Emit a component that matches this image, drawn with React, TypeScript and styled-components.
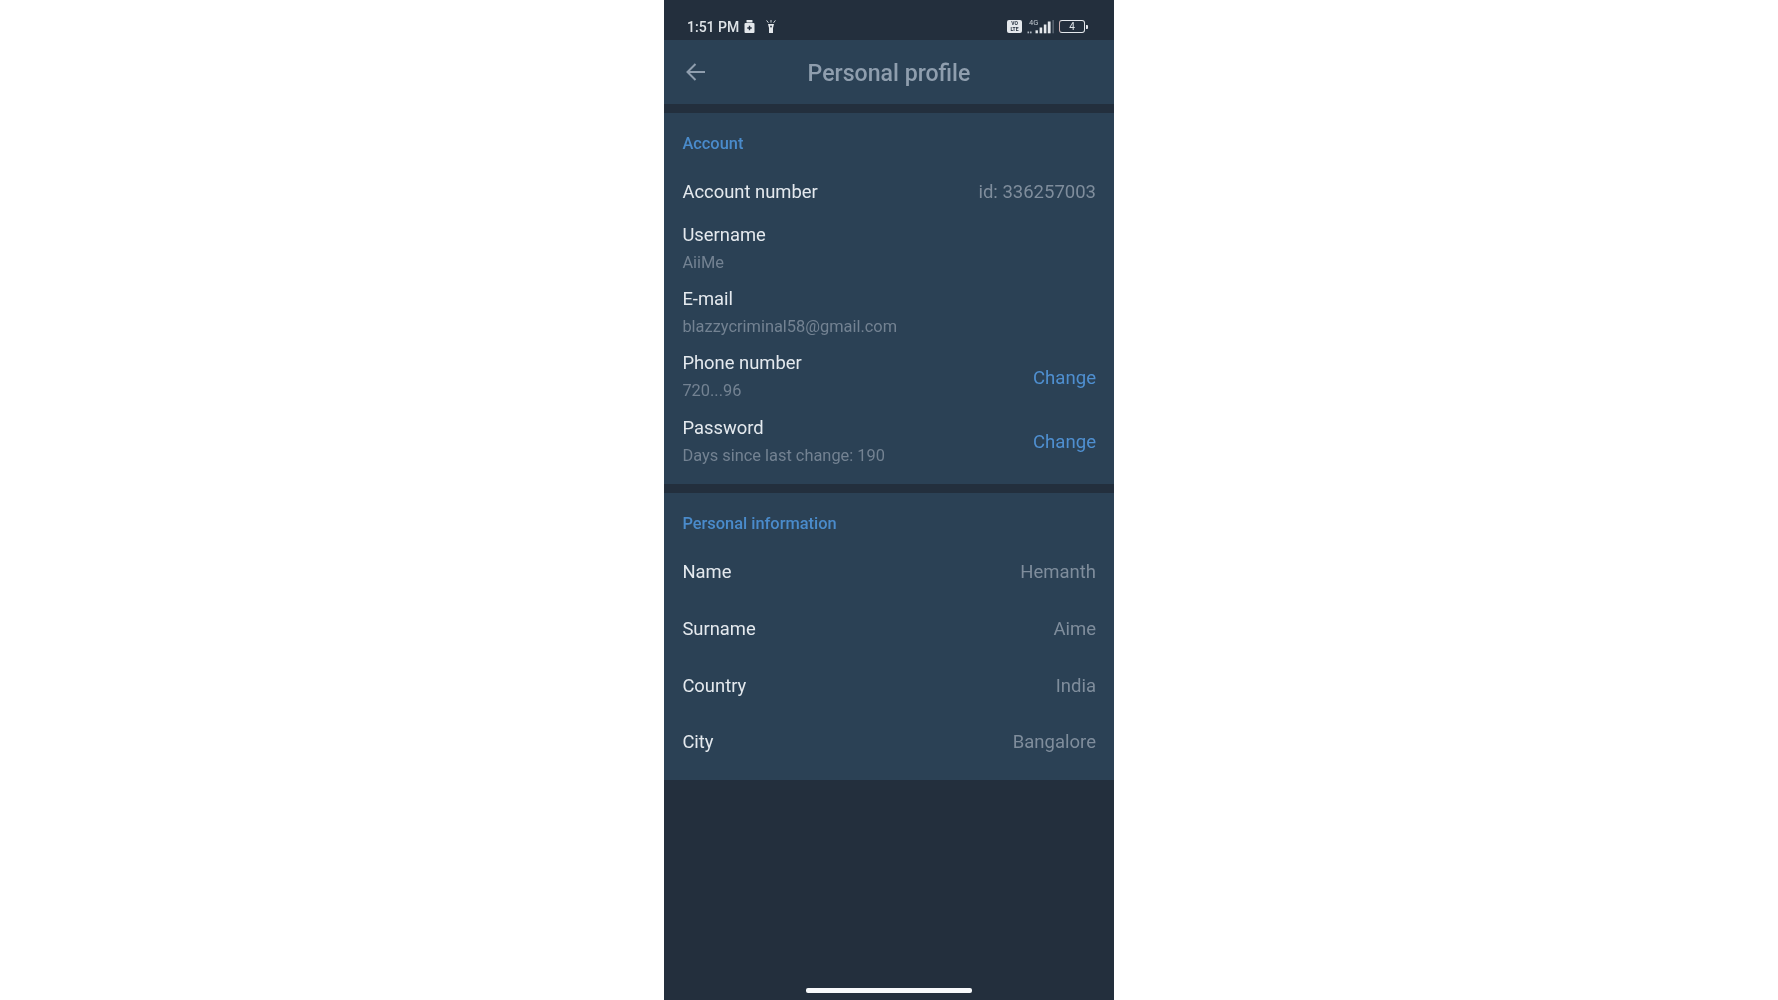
import React from "react";
import styled, { createGlobalStyle } from "styled-components";

const GlobalStyle = createGlobalStyle`
  html, body {
    margin: 0;
    padding: 0;
    background: #ffffff;
    font-family: Roboto, "Liberation Sans", sans-serif;
  }
`;

const accountRows = [
  { label: "Username", sub: "AiiMe" },
  { label: "E-mail", sub: "blazzycriminal58@gmail.com" },
  { label: "Phone number", sub: "720...96", action: "Change" },
  { label: "Password", sub: "Days since last change: 190", action: "Change" },
];

const personalRows = [
  { label: "Name", value: "Hemanth" },
  { label: "Surname", value: "Aime" },
  { label: "Country", value: "India" },
  { label: "City", value: "Bangalore" },
];

const SignalBars = () => (
  <svg width="27" height="14" viewBox="0 0 27 14">
    <rect x="0.5" y="11.5" width="1.6" height="1.8" fill="#aeb7c0" />
    <rect x="3" y="11.5" width="1.6" height="1.8" fill="#aeb7c0" />
    <rect x="8.5" y="10.3" width="2.4" height="3" fill="#e4e8ec" />
    <rect x="12.6" y="7.5" width="2.6" height="5.8" fill="#e4e8ec" />
    <rect x="16.8" y="4.5" width="2.6" height="8.8" fill="#e4e8ec" />
    <rect x="20.8" y="1.5" width="2.8" height="11.8" fill="#e4e8ec" />
    <rect x="25.6" y="0" width="1" height="13.3" fill="#77828e" />
  </svg>
);

const App: React.FC = () => (
  <>
    <GlobalStyle />
    <Page>
      <Phone>
        <StatusBar>
          <StatusLeft>
            <Time>1:51 PM</Time>
            <svg width="11" height="13" viewBox="0 0 11 13">
              <rect x="2.5" y="0" width="6" height="2.5" rx="0.5" fill="#e4e8ec" />
              <rect x="0.5" y="3" width="10" height="10" rx="1" fill="#e4e8ec" />
              <path d="M5.5 5.8v4.4M3.3 8h4.4" stroke="#232f3e" strokeWidth="1.4" />
            </svg>
            <TorchIcon width="10" height="13" viewBox="0 0 10 13">
              <path d="M2 4h6l-1 4v5H3V8z" fill="#e4e8ec" />
              <path d="M5 0v2.6M.6 .4l1.8 2.4M9.4 .4L7.6 2.8" stroke="#cfd5da" strokeWidth="1" fill="none" />
              <circle cx="5" cy="6.5" r="0.9" fill="#232f3e" />
            </TorchIcon>
          </StatusLeft>
          <StatusRight>
            <Volte>
              <span>VO</span>
              <span>LTE</span>
            </Volte>
            <NetworkBlock>
              <NetworkLabel>4G</NetworkLabel>
              <SignalBars />
            </NetworkBlock>
            <BatteryBody>
              <BatteryLevel>4</BatteryLevel>
            </BatteryBody>
            <BatteryTip />
          </StatusRight>
        </StatusBar>

        <Header>
          <BackIcon width="22" height="20" viewBox="0 0 22 20" fill="none">
            <path d="M20 10H2.5M10.5 2L2.5 10l8 8" stroke="#8f9eae" strokeWidth="2" />
          </BackIcon>
          <Title>Personal profile</Title>
        </Header>

        <AccountSection>
          <SectionTitle $gap={13}>Account</SectionTitle>
          <InlineRow $height={50}>
            <Label>Account number</Label>
            <Value>id: 336257003</Value>
          </InlineRow>
          {accountRows.map((row) => (
            <StackedRow key={row.label}>
              <TextBlock>
                <Label>{row.label}</Label>
                <SubValue>{row.sub}</SubValue>
              </TextBlock>
              {row.action && <Action>{row.action}</Action>}
            </StackedRow>
          ))}
        </AccountSection>

        <PersonalSection>
          <SectionTitle $gap={10}>Personal information</SectionTitle>
          {personalRows.map((row) => (
            <InlineRow key={row.label} $height={56.67}>
              <Label>{row.label}</Label>
              <Value>{row.value}</Value>
            </InlineRow>
          ))}
        </PersonalSection>

        <HomeArea>
          <HomeIndicator />
        </HomeArea>
      </Phone>
    </Page>
  </>
);

export default App;

const Page = styled.div`
  display: flex;
  justify-content: center;
  height: 1000px;
  overflow: hidden;
  background: #ffffff;
`;

const Phone = styled.main`
  display: flex;
  flex-direction: column;
  width: 450px;
  height: 1000px;
  background: #232f3d;
  filter: blur(0.4px);
`;

const StatusBar = styled.div`
  display: flex;
  flex: 0 0 40px;
  align-items: center;
  justify-content: space-between;
  padding: 13px 26px 0 23px;
  box-sizing: border-box;
`;

const StatusLeft = styled.div`
  display: flex;
  align-items: center;
  gap: 5px;
`;

const Time = styled.span`
  font-size: 14px;
  font-weight: 500;
  color: #dfe4e8;
`;

const TorchIcon = styled.svg`
  margin-left: 6px;
`;

const StatusRight = styled.div`
  display: flex;
  align-items: center;
`;

const Volte = styled.div`
  display: flex;
  flex-direction: column;
  align-items: center;
  justify-content: center;
  width: 15px;
  height: 13px;
  margin-right: 5px;
  border-radius: 2px;
  background: #e4e8ec;
  color: #232f3e;
  font-size: 5px;
  font-weight: 700;
  line-height: 5.5px;
`;

const NetworkBlock = styled.div`
  position: relative;
  display: flex;
  align-items: flex-end;
  height: 14px;
  margin-right: 5px;
`;

const NetworkLabel = styled.span`
  position: absolute;
  left: 2px;
  top: -1px;
  font-size: 7.5px;
  line-height: 8px;
  color: #c3cad1;
`;

const BatteryBody = styled.div`
  display: flex;
  align-items: center;
  justify-content: center;
  box-sizing: border-box;
  width: 26px;
  height: 13px;
  border: 1.5px solid #e4e8ec;
  border-left-color: #c9aeb0;
  border-radius: 3px;
`;

const BatteryLevel = styled.span`
  font-size: 10px;
  line-height: 10px;
  color: #dfe4e8;
`;

const BatteryTip = styled.div`
  width: 2px;
  height: 4px;
  margin-left: 1px;
  border-radius: 0 1px 1px 0;
  background: #e4e8ec;
`;

const Header = styled.header`
  position: relative;
  display: flex;
  flex: 0 0 64px;
  align-items: center;
  justify-content: center;
  background: #2b4155;
`;

const BackIcon = styled.svg`
  position: absolute;
  left: 21px;
  top: 22px;
`;

const Title = styled.h1`
  margin: 2px 0 0;
  font-size: 23.1px;
  font-weight: 500;
  color: #8f9eae;
`;

const Section = styled.section`
  background: #2b4155;
  padding: 21px 18px 0 18.4px;
`;

const AccountSection = styled(Section)`
  flex: 0 0 371px;
  box-sizing: border-box;
  margin-top: 9px;
`;

const PersonalSection = styled(Section)`
  flex: 0 0 287px;
  box-sizing: border-box;
  margin-top: 9px;
`;

const SectionTitle = styled.h2<{ $gap: number }>`
  height: 20px;
  margin: 0 0 ${(p) => p.$gap}px;
  font-size: 16.4px;
  font-weight: 500;
  line-height: 20px;
  color: #4a8bcb;
`;

const InlineRow = styled.div<{ $height: number }>`
  display: flex;
  align-items: center;
  justify-content: space-between;
  height: ${(p) => p.$height}px;
`;

const StackedRow = styled.div`
  display: flex;
  align-items: center;
  justify-content: space-between;
  height: 64.3px;
`;

const TextBlock = styled.div`
  margin-bottom: 3px;
`;

const Label = styled.div`
  font-size: 18.4px;
  line-height: 24px;
  color: #e4e9ee;
`;

const Value = styled.div`
  font-size: 18.5px;
  line-height: 24px;
  color: #7f8d9c;
`;

const SubValue = styled.div`
  margin-top: 6px;
  font-size: 16.4px;
  line-height: 20px;
  color: #738292;
`;

const Action = styled.button`
  padding: 0;
  border: 0;
  background: none;
  font-family: inherit;
  font-size: 18.6px;
  line-height: 24px;
  color: #4f8fd0;
`;

const HomeArea = styled.div`
  display: flex;
  flex: 1;
  align-items: flex-end;
  justify-content: center;
  padding-bottom: 7px;
`;

const HomeIndicator = styled.div`
  width: 166px;
  height: 5px;
  border-radius: 2px;
  background: #f7f9fb;
`;
